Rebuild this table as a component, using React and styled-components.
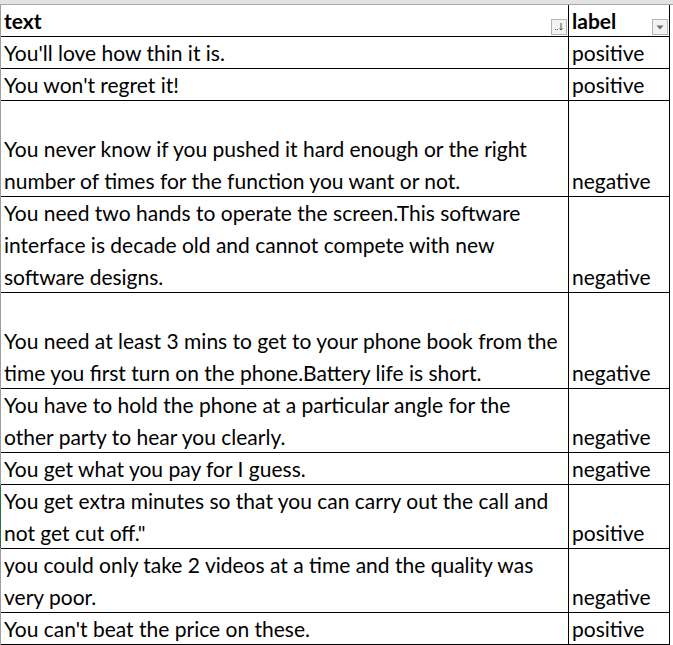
import React from 'react'
import styled, { createGlobalStyle } from 'styled-components'

const GlobalStyle = createGlobalStyle`
  html, body {
    margin: 0;
    padding: 0;
    background: #fff;
  }
  body {
    font-family: Lato, "Liberation Sans", sans-serif;
    color: #000;
  }
`

const rows = [
  { lines: ["You'll love how thin it is."], size: 1, label: 'positive' },
  { lines: ["You won't regret it!"], size: 1, label: 'positive' },
  {
    lines: [
      'You never know if you pushed it hard enough or the right',
      'number of times for the function you want or not.',
    ],
    size: 3,
    label: 'negative',
  },
  {
    lines: [
      'You need two hands to operate the screen.This software',
      'interface is decade old and cannot compete with new',
      'software designs.',
    ],
    size: 3,
    label: 'negative',
  },
  {
    lines: [
      'You need at least 3 mins to get to your phone book from the',
      'time you first turn on the phone.Battery life is short.',
    ],
    size: 3,
    label: 'negative',
  },
  {
    lines: [
      'You have to hold the phone at a particular angle for the',
      'other party to hear you clearly.',
    ],
    size: 2,
    label: 'negative',
  },
  { lines: ['You get what you pay for I guess.'], size: 1, label: 'negative' },
  {
    lines: [
      'You get extra minutes so that you can carry out the call and',
      'not get cut off."',
    ],
    size: 2,
    label: 'positive',
    selected: true,
  },
  {
    lines: [
      'you could only take 2 videos at a time and the quality was',
      'very poor.',
    ],
    size: 2,
    label: 'negative',
  },
  { lines: ["You can't beat the price on these."], size: 1, label: 'positive' },
]

const SortIcon = () => (
  <svg width="10" height="10" viewBox="0 0 10 10">
    <rect x="1" y="7" width="1" height="1" fill="#5a5a5a" />
    <rect x="3" y="7" width="1" height="1" fill="#5a5a5a" />
    <path d="M7 1 V8 M5.5 6.5 L7 8 L8.5 6.5" stroke="#4a4a4a" strokeWidth="1" fill="none" />
  </svg>
)

const DropIcon = () => (
  <svg width="8" height="5" viewBox="0 0 8 5">
    <path d="M0.5 0.5 H7.5 L4 4.5 Z" fill="#6b6b6b" />
  </svg>
)

const App = () => {
  return (
    <>
      <GlobalStyle />
      <Page>
        <TopStrip />
        <Sheet>
          <HeaderRow>
            <HeadCell>
              text
              <FilterButton>
                <SortIcon />
              </FilterButton>
            </HeadCell>
            <HeadCell $last>
              label
              <FilterButton>
                <DropIcon />
              </FilterButton>
            </HeadCell>
          </HeaderRow>
          {rows.map((row, i) => (
            <Row key={i} $size={row.size} $selected={row.selected}>
              <TextCell>
                {row.lines.map((l, j) => (
                  <Line key={j}>{l}</Line>
                ))}
              </TextCell>
              <LabelCell>
                <Line>{row.label}</Line>
              </LabelCell>
            </Row>
          ))}
        </Sheet>
      </Page>
    </>
  )
}

const Page = styled.div`
  width: 673px;
  height: 645px;
  overflow: hidden;
  background: #fff;
`

const TopStrip = styled.div`
  height: 4px;
  background: #e3e3e3;
  border-bottom: 1px solid #a8a8a8;
`

const Sheet = styled.div`
  width: 668px;
  border-left: 1px solid #9e9e9e;
  border-right: 1px solid #000;
`

const HeaderRow = styled.div`
  display: grid;
  grid-template-columns: 568px 100px;
  height: 31px;
  border-bottom: 1px solid #000;
`

const HeadCell = styled.div`
  position: relative;
  display: flex;
  align-items: flex-end;
  padding-left: 3px;
  font-weight: 700;
  font-size: 21px;
  line-height: 31px;
  border-right: ${(p) => (p.$last ? 'none' : '1px solid #000')};
`

const FilterButton = styled.span`
  position: absolute;
  right: 1px;
  bottom: 1px;
  width: 14px;
  height: 14px;
  border: 1px solid #b4b4b4;
  background: #f2f2f2;
  display: flex;
  align-items: center;
  justify-content: center;
`

const Row = styled.div`
  display: grid;
  grid-template-columns: 568px 100px;
  height: ${(p) => p.$size * 32 - 1}px;
  border-bottom: 1px solid #000;
  position: relative;
  &::before {
    content: '';
    display: ${(p) => (p.$selected ? 'block' : 'none')};
    position: absolute;
    left: -1px;
    top: 0;
    bottom: 0;
    width: 1px;
    background: #217346;
  }
`

const Cell = styled.div`
  display: flex;
  flex-direction: column;
  justify-content: flex-end;
  padding-left: 3px;
  font-size: 21px;
  line-height: 32px;
  overflow: hidden;
  white-space: nowrap;
  margin-bottom: -1px;
`

const TextCell = styled(Cell)`
  border-right: 1px solid #000;
`

const LabelCell = styled(Cell)``

const Line = styled.div`
  height: 32px;
`

export default App
